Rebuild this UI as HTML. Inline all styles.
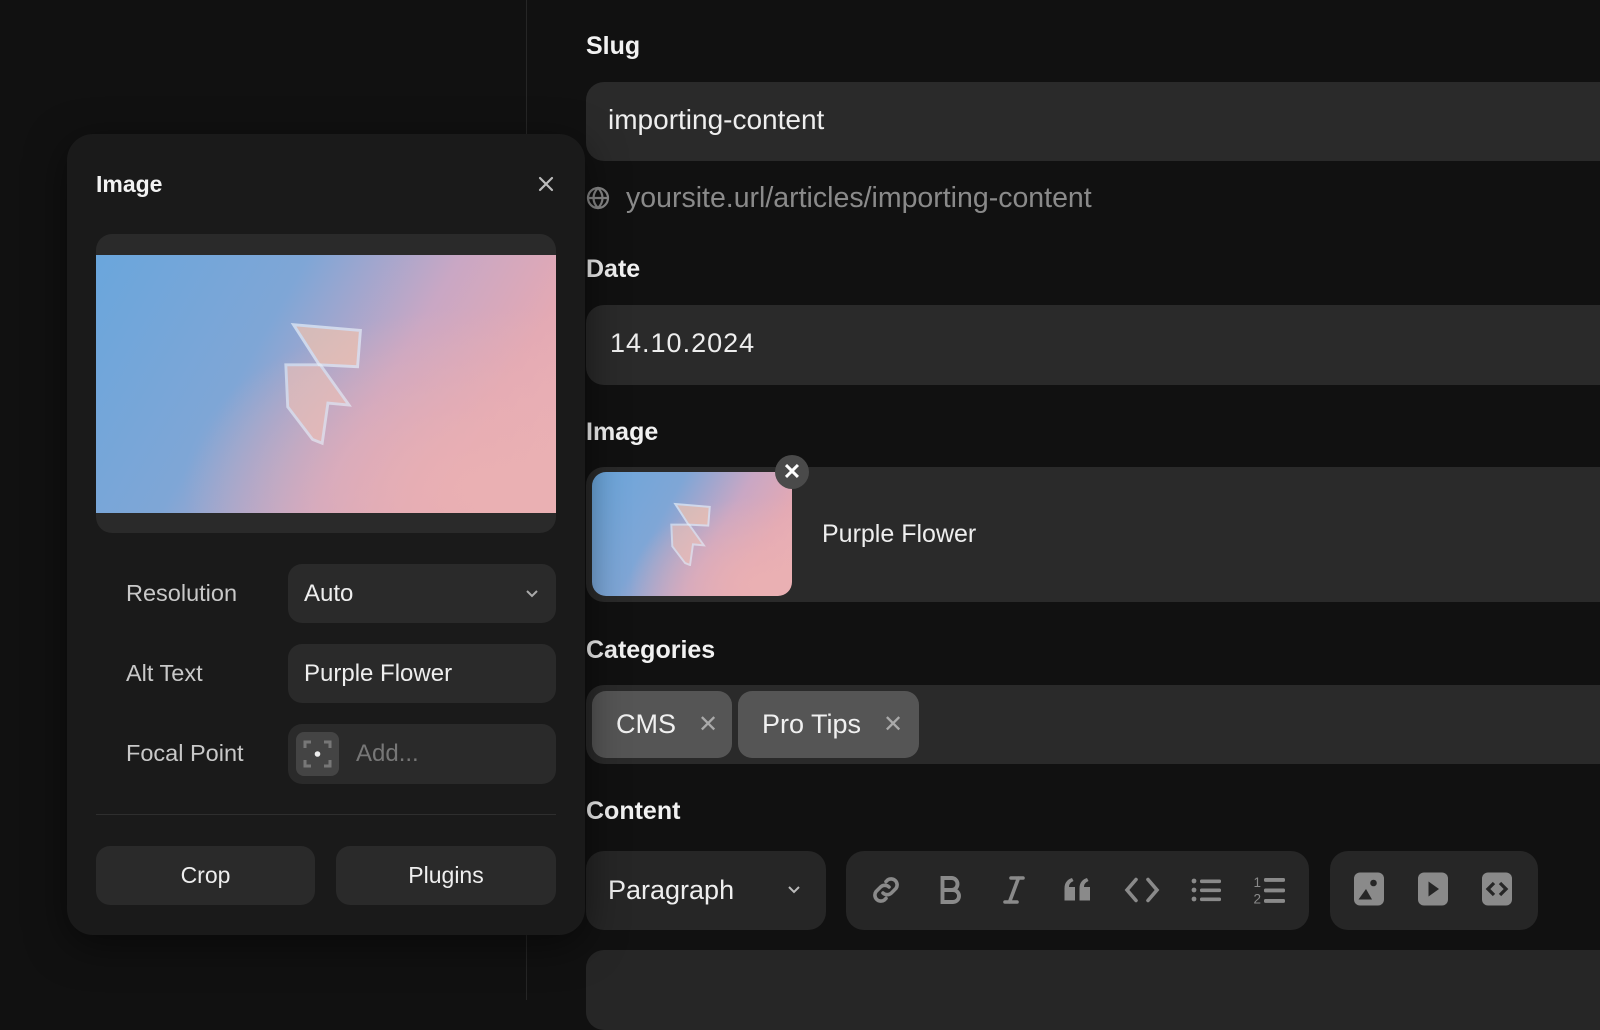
<!DOCTYPE html>
<html><head><meta charset="utf-8"><style>
*{box-sizing:border-box;margin:0;padding:0}
body{width:1600px;height:1000px;overflow:hidden;background:#111111;font-family:"Liberation Sans",sans-serif;color:#fff;position:relative}
.abs{position:absolute}
.divider{left:526px;top:0;width:1px;height:1000px;background:#262626}
.panel{left:67px;top:134px;width:518px;height:801px;background:#1a1a1a;border-radius:26px;box-shadow:0 10px 40px rgba(0,0,0,.5)}
.lbl{font-weight:bold;font-size:25px;color:#f2f2f2}
.field{background:#2a2a2a;border-radius:18px}
.pin{background:#2a2a2a;border-radius:14px;font-size:24px;color:#eee;display:flex;align-items:center;padding-left:16px}
.plabel{font-size:23.5px;color:#c8c8c8}
.btn{background:#2a2a2a;border-radius:14px;font-size:23px;display:flex;align-items:center;justify-content:center;color:#eee}
.grad{background:radial-gradient(ellipse at 85% 90%,#eab0b3 0%,rgba(234,176,179,0) 55%),linear-gradient(120deg,#6aa6dc 0%,#7fa6d6 35%,#c9a7c4 60%,#e3a9b4 80%,#ecb2b4 100%)}
.chip{background:#555;border-radius:14px;height:67px;top:691px;display:flex;align-items:center;font-size:27px;color:#f0f0f0;padding-left:24px}
.chip span.x{color:#aaa;font-size:24px;margin-left:22px}
.tb{background:#262626;border-radius:18px;top:851px;height:79px}
.ic{position:absolute;top:872px;width:36px;height:36px}
</style></head><body>
<div class="abs divider"></div>

<div class="abs lbl" style="left:586px;top:32px">Slug</div>
<div class="abs field" style="left:586px;top:82px;width:1040px;height:79px"></div>
<div class="abs" style="left:608px;top:104px;font-size:28px;color:#eee">importing-content</div>
<svg class="abs" style="left:586px;top:186px" width="24" height="24" viewBox="0 0 24 24" fill="none" stroke="#888" stroke-width="2.2"><circle cx="12" cy="12" r="10"/><path d="M2 12h20M12 2c3 3 4.5 6.5 4.5 10s-1.5 7-4.5 10c-3-3-4.5-6.5-4.5-10S9 5 12 2z"/></svg>
<div class="abs" style="left:626px;top:182px;font-size:28.5px;color:#8a8a8a">yoursite.url/articles/importing-content</div>

<div class="abs lbl" style="left:586px;top:255px">Date</div>
<div class="abs field" style="left:586px;top:305px;width:1040px;height:80px"></div>
<div class="abs" style="left:610px;top:328px;font-size:27px;color:#eee;letter-spacing:1px">14.10.2024</div>

<div class="abs lbl" style="left:586px;top:418px">Image</div>
<div class="abs field" style="left:586px;top:467px;width:1040px;height:135px"></div>
<div class="abs grad" style="left:592px;top:472px;width:200px;height:124px;border-radius:14px"></div>
<svg class="abs" style="left:668px;top:502px" width="48" height="64" viewBox="0 0 92 130"><path d="M12 4l70 6-3 38-40-2z" fill="#f2c4b0" opacity=".7" stroke="#e6eef8" stroke-width="4"/><path d="M4 46l36 0 30 42-22-2-6 42-10-4-26-34z" fill="#eec0b6" opacity=".65" stroke="#e6eef8" stroke-width="4"/></svg>
<div class="abs" style="left:775px;top:455px;width:34px;height:34px;border-radius:50%;background:#4a4a4a;color:#fff;font-weight:bold;font-size:22px;display:flex;align-items:center;justify-content:center">✕</div>
<div class="abs" style="left:822px;top:520px;font-size:25px;color:#eee">Purple Flower</div>

<div class="abs lbl" style="left:586px;top:636px">Categories</div>
<div class="abs field" style="left:586px;top:685px;width:1040px;height:79px"></div>
<div class="abs chip" style="left:592px;width:140px">CMS<span class="x">✕</span></div>
<div class="abs chip" style="left:738px;width:181px">Pro Tips<span class="x">✕</span></div>

<div class="abs lbl" style="left:586px;top:797px">Content</div>
<div class="abs tb" style="left:586px;width:240px"></div>
<div class="abs" style="left:608px;top:875px;font-size:27px;color:#eee">Paragraph</div>
<svg class="abs" style="left:786px;top:884px" width="16" height="12" viewBox="0 0 16 12" fill="none" stroke="#bbb" stroke-width="2"><path d="M3 3l5 5 5-5"/></svg>
<div class="abs tb" style="left:846px;width:463px"></div>
<div class="abs tb" style="left:1330px;width:208px"></div>
<svg class="ic" style="left:868px" viewBox="0 0 24 24" fill="none" stroke="#8a8a8a" stroke-width="2.4" stroke-linecap="round"><path d="M10 14a4 4 0 0 0 5.6 0l3-3a4 4 0 0 0-5.6-5.6l-1 1"/><path d="M14 10a4 4 0 0 0-5.6 0l-3 3a4 4 0 0 0 5.6 5.6l1-1"/></svg>
<svg class="ic" style="left:932px" viewBox="0 0 24 24" fill="none" stroke="#8a8a8a" stroke-width="2.6"><path d="M7 4h6a4 4 0 0 1 0 8H7zM7 12h7a4 4 0 0 1 0 8H7z"/></svg>
<svg class="ic" style="left:996px" viewBox="0 0 24 24" fill="none" stroke="#8a8a8a" stroke-width="2.4" stroke-linecap="round"><path d="M10 4h8M6 20h8M15 4L9 20"/></svg>
<svg class="ic" style="left:1060px" viewBox="0 0 24 24" fill="#8a8a8a"><path d="M3 11c0-4 2-6 5-7l1 2c-2 1-3 2-3 4h4v9H3zM13 11c0-4 2-6 5-7l1 2c-2 1-3 2-3 4h4v9h-7z"/></svg>
<svg class="ic" style="left:1124px" viewBox="0 0 24 24" fill="none" stroke="#8a8a8a" stroke-width="2.4" stroke-linecap="round"><path d="M8 5l-6 7 6 7M16 5l6 7-6 7"/></svg>
<svg class="ic" style="left:1188px" viewBox="0 0 24 24" fill="#8a8a8a"><circle cx="4" cy="6" r="1.6"/><circle cx="4" cy="12" r="1.6"/><circle cx="4" cy="18" r="1.6"/><rect x="8" y="5" width="14" height="2.4" rx="1"/><rect x="8" y="11" width="14" height="2.4" rx="1"/><rect x="8" y="17" width="14" height="2.4" rx="1"/></svg>
<svg class="ic" style="left:1252px" viewBox="0 0 24 24" fill="#8a8a8a"><text x="1" y="10" font-size="9" font-family="Liberation Sans" fill="#8a8a8a">1</text><text x="1" y="21" font-size="9" font-family="Liberation Sans" fill="#8a8a8a">2</text><rect x="8" y="4" width="14" height="2.6" rx="1"/><rect x="8" y="11" width="14" height="2.6" rx="1"/><rect x="8" y="18" width="14" height="2.6" rx="1"/></svg>
<svg class="ic" style="left:1351px;top:871px" viewBox="0 0 24 24"><rect x="2" y="1" width="20" height="22" rx="4" fill="#8a8a8a"/><circle cx="15" cy="8" r="2.2" fill="#262626"/><path d="M5 19l5-7 4 7z" fill="#262626"/></svg>
<svg class="ic" style="left:1415px;top:871px" viewBox="0 0 24 24"><rect x="2" y="1" width="20" height="22" rx="4" fill="#8a8a8a"/><path d="M9 7l7 5-7 5z" fill="#262626"/></svg>
<svg class="ic" style="left:1479px;top:871px" viewBox="0 0 24 24"><rect x="2" y="1" width="20" height="22" rx="4" fill="#8a8a8a"/><path d="M10 8l-4 4 4 4M14 8l4 4-4 4" fill="none" stroke="#262626" stroke-width="2.2"/></svg>
<div class="abs" style="left:586px;top:950px;width:1040px;height:80px;background:#262626;border-radius:18px"></div>

<div class="abs panel"></div>
<div class="abs" style="left:96px;top:171px;font-size:23px;font-weight:bold;color:#f2f2f2">Image</div>
<svg class="abs" style="left:537px;top:175px" width="18" height="18" viewBox="0 0 18 18" stroke="#bbb" stroke-width="2.2" stroke-linecap="round"><path d="M3 3l12 12M15 3L3 15"/></svg>
<div class="abs" style="left:96px;top:234px;width:460px;height:299px;background:#2a2a2a;border-radius:16px"></div>
<div class="abs grad" style="left:96px;top:255px;width:460px;height:258px"></div>
<svg class="abs" style="left:282px;top:320px" width="88" height="126" viewBox="0 0 92 130"><path d="M12 4l70 6-3 38-40-2z" fill="#f2c4b0" opacity=".7" stroke="#e6eef8" stroke-width="3"/><path d="M4 46l36 0 30 42-22-2-6 42-10-4-26-34z" fill="#eec0b6" opacity=".65" stroke="#e6eef8" stroke-width="3"/></svg>
<div class="abs plabel" style="left:126px;top:580px">Resolution</div>
<div class="abs pin" style="left:288px;top:564px;width:268px;height:59px">Auto</div>
<svg class="abs" style="left:524px;top:588px" width="16" height="12" viewBox="0 0 16 12" fill="none" stroke="#aaa" stroke-width="2"><path d="M3 3l5 5 5-5"/></svg>
<div class="abs plabel" style="left:126px;top:660px">Alt Text</div>
<div class="abs pin" style="left:288px;top:644px;width:268px;height:59px">Purple Flower</div>
<div class="abs plabel" style="left:126px;top:740px">Focal Point</div>
<div class="abs pin" style="left:288px;top:724px;width:268px;height:60px;padding-left:68px;color:#777">Add...</div>
<svg class="abs" style="left:296px;top:732px" width="43" height="44" viewBox="0 0 43 44"><rect width="43" height="44" rx="8" fill="#444"/><path d="M9 16v-6h6M28 10h6v6M34 28v6h-6M15 34H9v-6" fill="none" stroke="#777" stroke-width="3"/><circle cx="21.5" cy="22" r="2.8" fill="#eee"/></svg>
<div class="abs" style="left:96px;top:814px;width:460px;height:1px;background:#2e2e2e"></div>
<div class="abs btn" style="left:96px;top:846px;width:219px;height:59px">Crop</div>
<div class="abs btn" style="left:336px;top:846px;width:220px;height:59px">Plugins</div>
</body></html>
